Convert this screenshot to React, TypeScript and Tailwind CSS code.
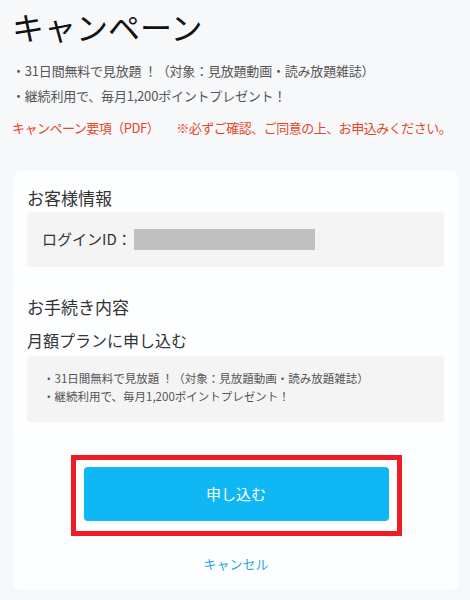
export default function App() {
  const font = { fontFamily: '"Noto Sans CJK JP", "Noto Sans", sans-serif' };
  return (
    <div
      className="min-h-[600px] w-[470px] bg-[#f7f8fa] pt-[4px] pb-[10px]"
      style={font}
    >
      <h1 className="pl-[12px] text-[32px] leading-[44px] font-normal text-[#111]">キャンペーン</h1>

      <ul className="mt-[10px] pl-[12px] text-[13px] leading-[25px] tracking-[-0.2px] text-[#555]">
        <li>・31日間無料で見放題 ！（対象：見放題動画・読み放題雑誌）</li>
        <li>・継続利用で、毎月1,200ポイントプレゼント！</li>
      </ul>

      <p className="mt-[10px] flex whitespace-nowrap pl-[12px] text-[13px] leading-[20px] tracking-[-0.5px] text-[#e2472b]">
        <span>キャンペーン要項（PDF）</span>
        <span className="ml-[17px]">※必ずご確認、ご同意の上、お申込みください。</span>
      </p>

      <div className="mt-[33px] ml-[13px] w-[446px] rounded-[8px] bg-[#fdfeff] px-[14px] pt-[15px] pb-[16px]">
        <h2 className="text-[17px] leading-[24px] text-[#333]">お客様情報</h2>
        <div className="mt-[2px] flex h-[55px] w-[417px] items-center rounded-[4px] bg-[#f4f4f5] pl-[15px] text-[15px] text-[#333]">
          <span>ログインID：</span>
          <span className="ml-[2px] h-[21px] w-[181px] bg-[#c0c0c0]" />
        </div>

        <h2 className="mt-[28px] text-[17px] leading-[24px] text-[#333]">お手続き内容</h2>
        <p className="mt-[9px] text-[16px] leading-[24px] text-[#333]">月額プランに申し込む</p>
        <div className="mt-[4px] h-[66px] w-[417px] rounded-[4px] bg-[#f4f4f5] pt-[13px] pl-[16px] text-[11.5px] leading-[18px] text-[#555]">
          <p>・31日間無料で見放題 ！（対象：見放題動画・読み放題雑誌）</p>
          <p>・継続利用で、毎月1,200ポイントプレゼント！</p>
        </div>

        <div className="mx-auto mt-[33px] w-[331px] border-[5px] border-[#ee1c25] px-[8px] pt-[7px] pb-[10px]">
          <button className="h-[54px] w-[305px] rounded-[4px] bg-[#0fb8f5] text-[15px] text-white">
            申し込む
          </button>
        </div>

        <p className="mt-[18px] text-center text-[13px] leading-[20px] text-[#29a9e0]">キャンセル</p>
      </div>
    </div>
  );
}
